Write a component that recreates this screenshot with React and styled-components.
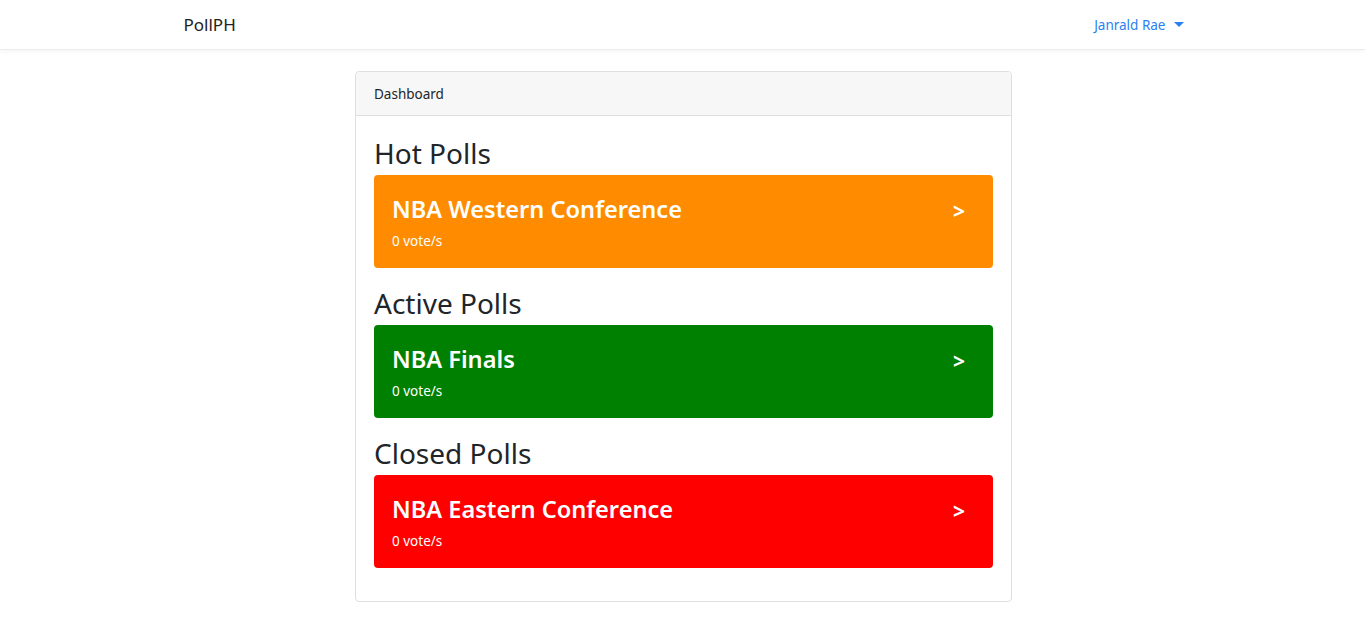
import React from "react";
import styled, { createGlobalStyle } from "styled-components";

const GlobalStyle = createGlobalStyle`
    body {
        margin: 0;
        background: #fff;
        font-family: "Noto Sans", "Open Sans", sans-serif;
        font-size: 14px;
        color: #212529;
    }
`;

const Navbar = styled.nav`
    height: 49px;
    background: #fff;
    box-shadow: 0 2px 4px rgba(0, 0, 0, 0.04);
    border-bottom: 1px solid #ececec;
`;

const NavInner = styled.div`
    max-width: 1000px;
    height: 100%;
    margin: 0 auto;
    padding-left: 2px;
    display: flex;
    align-items: center;
    justify-content: space-between;
`;

const Brand = styled.a`
    font-size: 17px;
    color: #222;
    text-decoration: none;
`;

const UserMenu = styled.a`
    display: flex;
    align-items: center;
    gap: 8px;
    font-size: 13.5px;
    color: #2a7ff2;
    text-decoration: none;
`;

const Caret = styled.span`
    width: 0;
    height: 0;
    border-top: 5px solid #2a7ff2;
    border-left: 5px solid transparent;
    border-right: 5px solid transparent;
`;

const Main = styled.main`
    display: flex;
    justify-content: center;
    padding: 21px 0 10px 2px;
`;

const Card = styled.div`
    width: 655px;
    border: 1px solid #dfdfdf;
    border-radius: 4px;
    background: #fff;
`;

const CardHeader = styled.div`
    height: 43px;
    display: flex;
    align-items: center;
    padding: 0 18px;
    background: #f7f7f7;
    border-bottom: 1px solid #dfdfdf;
    border-radius: 4px 4px 0 0;
    font-size: 13.5px;
`;

const CardBody = styled.div`
    padding: 20px 18px 15px;
`;

const SectionTitle = styled.h3`
    margin: 0 0 5px;
    font-size: 28px;
    font-weight: 400;
    line-height: 34px;
    color: #212529;
`;

const PollBox = styled.a`
    display: flex;
    justify-content: space-between;
    align-items: flex-start;
    height: 93px;
    box-sizing: border-box;
    padding: 20px 28px 0 18px;
    margin-bottom: 18px;
    border-radius: 4px;
    background: ${(p) => p.$color};
    color: #fff;
    text-decoration: none;
`;

const PollTitle = styled.div`
    font-size: 23.6px;
    font-weight: 600;
    line-height: 29px;
`;

const PollVotes = styled.div`
    margin-top: 8px;
    font-size: 13.5px;
    line-height: 18px;
`;

const Arrow = styled.span`
    font-size: 21px;
    font-weight: 700;
    line-height: 29px;
    margin-top: 2px;
`;

const sections = [
    { title: "Hot Polls", poll: "NBA Western Conference", color: "#ff8c00" },
    { title: "Active Polls", poll: "NBA Finals", color: "#008000" },
    { title: "Closed Polls", poll: "NBA Eastern Conference", color: "#ff0000" },
];

export default function App() {
    return (
        <>
            <GlobalStyle />
            <Navbar>
                <NavInner>
                    <Brand href="#">PollPH</Brand>
                    <UserMenu href="#">
                        Janrald Rae <Caret />
                    </UserMenu>
                </NavInner>
            </Navbar>
            <Main>
                <Card>
                    <CardHeader>Dashboard</CardHeader>
                    <CardBody>
                        {sections.map((s) => (
                            <section key={s.title}>
                                <SectionTitle>{s.title}</SectionTitle>
                                <PollBox href="#" $color={s.color}>
                                    <div>
                                        <PollTitle>{s.poll}</PollTitle>
                                        <PollVotes>0 vote/s</PollVotes>
                                    </div>
                                    <Arrow>&gt;</Arrow>
                                </PollBox>
                            </section>
                        ))}
                    </CardBody>
                </Card>
            </Main>
        </>
    );
}
